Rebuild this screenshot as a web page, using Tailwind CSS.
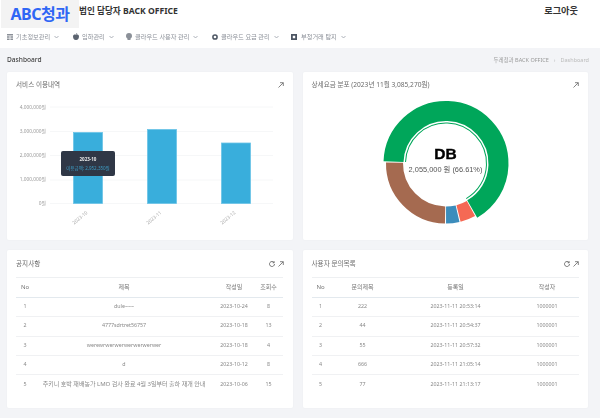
<!DOCTYPE html>
<html lang="ko">
<head>
<meta charset="UTF-8" />
<title>Dashboard</title>
<script src="https://cdn.jsdelivr.net/npm/@tailwindcss/browser@4"></script>
</head>
<body class="w-[600px] h-[418px] overflow-hidden bg-[#f3f4f7] font-['Noto_Sans','Noto_Sans_CJK_KR',sans-serif] text-[#777]">
	<header class="bg-white h-[48px]">
		<div class="flex items-start h-[28px]">
			<div class="w-[78px] h-[28px] ml-px bg-[#f3f3f3] flex items-center justify-center text-[16px] leading-none font-bold tracking-[-0.5px] text-[#2f66f5]">ABC청과</div>
			<div class="h-[22px] flex items-center text-[8.6px] font-bold text-[#333] whitespace-nowrap">법인 담당자 BACK OFFICE</div>
			<div class="ml-auto mr-[22px] h-[22px] flex items-center text-[9.2px] font-bold text-[#333]">로그아웃</div>
		</div>
		<nav class="will-change-transform flex items-center h-[16px] mt-px pl-[7px] text-[6.2px] text-[#8b9098] whitespace-nowrap">
			<div class="flex items-center w-[66px]">
				<svg class="w-[6px] h-[6px] mr-[3px]" viewBox="0 0 6 6" fill="#8b9098"><path d="M0 0h6v1.400H0zM0 2.300h2.600v1.400H0zM3.400 2.300H6v1.400H3.400zM0 4.600h2.600V6H0zM3.400 4.600H6V6H3.400z"/></svg>
				<span>기초정보관리</span>
				<svg class="w-[5px] h-[4px] ml-[4px]" viewBox="0 0 5 4" fill="none" stroke="#9aa0a8" stroke-width=".8"><path d="M.5 1l2 2 2-2"/></svg>
			</div>
			<div class="flex items-center w-[53px]">
				<svg class="w-[6px] h-[7px] mr-[3px]" viewBox="0 0 6 7" fill="#5c6470"><path d="M3 1.800C4 1.300 6 1.400 6 3.600 6 5.400 4.800 7 4 7 3.500 7 3.400 6.700 3 6.700S2.500 7 2 7C1.200 7 0 5.400 0 3.600 0 1.400 2 1.300 3 1.800zM3 1.500C3 .8 3.500.2 4.200 0 4.200.8 3.700 1.400 3 1.500z"/></svg>
				<span>입하관리</span>
				<svg class="w-[5px] h-[4px] ml-[4px]" viewBox="0 0 5 4" fill="none" stroke="#9aa0a8" stroke-width=".8"><path d="M.5 1l2 2 2-2"/></svg>
			</div>
			<div class="flex items-center w-[86px]">
				<svg class="w-[6px] h-[7px] mr-[3px]" viewBox="0 0 6 7" fill="#8b9098"><path d="M3 0a3 3 0 0 1 3 3c0 1.400-.9 2.300-1.500 2.700V7h-3V5.700C.9 5.300 0 4.400 0 3a3 3 0 0 1 3-3z"/></svg>
				<span>클라우드 사용자 관리</span>
				<svg class="w-[5px] h-[4px] ml-[4px]" viewBox="0 0 5 4" fill="none" stroke="#9aa0a8" stroke-width=".8"><path d="M.5 1l2 2 2-2"/></svg>
			</div>
			<div class="flex items-center w-[79px]">
				<svg class="w-[6px] h-[6px] mr-[3px]" viewBox="0 0 6 6" fill="none" stroke="#4d5663" stroke-width="1.500"><circle cx="3" cy="3" r="2.100"/></svg>
				<span>클라우드 요금 관리</span>
				<svg class="w-[5px] h-[4px] ml-[4px]" viewBox="0 0 5 4" fill="none" stroke="#9aa0a8" stroke-width=".8"><path d="M.5 1l2 2 2-2"/></svg>
			</div>
			<div class="flex items-center">
				<svg class="w-[6px] h-[6px] mr-[4px]" viewBox="0 0 6 6" fill="#4d5663"><path d="M0 0h6v6H0zM1.800 1.800v2.400h2.400V1.800z"/></svg>
				<span>부청거래 탐지</span>
				<svg class="w-[5px] h-[4px] ml-[4px]" viewBox="0 0 5 4" fill="none" stroke="#9aa0a8" stroke-width=".8"><path d="M.5 1l2 2 2-2"/></svg>
			</div>
		</nav>
	</header>

	<main class="will-change-transform pl-[7px] pr-[12px]">
		<div class="flex items-center justify-between h-[24px] mr-[-1px]">
			<h1 class="text-[6.6px] font-medium text-[#444]">Dashboard</h1>
			<div class="flex items-center text-[5.5px] text-[#999]">
				<span>두레청과 BACK OFFICE</span>
				<span class="mx-[5px] text-[#bbb]">›</span>
				<span class="text-[#bbb]">Dashboard</span>
			</div>
		</div>

		<div class="grid grid-cols-2 gap-[10px] grid-rows-[168px_158px]">
			<section class="relative bg-white rounded-[2px] shadow-[0_0_2px_rgba(0,0,0,0.04)]">
				<div class="flex items-center justify-between h-[26px] px-[9px] text-[6.6px] text-[#6b6b6b]">
					<span>서비스 이용내역</span>
					<svg class="w-[6px] h-[6px]" viewBox="0 0 6 6" fill="none" stroke="#666" stroke-width=".8"><path d="M.5 5.500L5.200.8M2 .7h3.300V4"/></svg>
				</div>
				<svg class="block" width="286" height="142" viewBox="0 0 286 142" font-size="4.8" fill="#999" font-family="'Noto Sans','Noto Sans CJK KR',sans-serif">
					<g stroke="#f6f7f8" stroke-width="1">
						<path d="M43 9h223M43 33.500h223M43 57.500h223M43 82h223M43 105.500h223"/>
					</g>
					<g text-anchor="end">
						<text x="39" y="10.500">4,000,000원</text>
						<text x="39" y="34.500">3,000,000원</text>
						<text x="39" y="59">2,000,000원</text>
						<text x="39" y="83">1,000,000원</text>
						<text x="39" y="107">0원</text>
					</g>
					<g fill="#39aedc" stroke="#6cc4e6" stroke-width=".8">
						<rect x="66.500" y="34.500" width="29" height="71"/>
						<rect x="140.500" y="31.500" width="29" height="74"/>
						<rect x="214.500" y="45" width="29" height="60.500"/>
					</g>
					<g text-anchor="middle" fill="#aaa">
						<text transform="translate(74 121) rotate(-40)">2023-10</text>
						<text transform="translate(148 121) rotate(-40)">2023-11</text>
						<text transform="translate(222 121) rotate(-40)">2023-12</text>
					</g>
				</svg>
				<div class="absolute left-[54px] top-[79px] w-[54px] h-[25px] rounded-[2px] bg-[#2f3746] flex flex-col items-center justify-center text-[4.5px] leading-[9px]">
					<span class="font-bold text-[#e8e8e8]">2023-10</span>
					<span class="text-[#3d9cc4] whitespace-nowrap">이용금액: 2,952,350원</span>
				</div>
			</section>

			<section class="bg-white rounded-[2px] shadow-[0_0_2px_rgba(0,0,0,0.04)] flex flex-col">
				<div class="flex items-center justify-between h-[26px] px-[9px] text-[6.6px] text-[#6b6b6b]">
					<span>상세요금 분포 (2023년 11월 3,085,270원)</span>
					<svg class="w-[6px] h-[6px]" viewBox="0 0 6 6" fill="none" stroke="#666" stroke-width=".8"><path d="M.5 5.500L5.200.8M2 .7h3.300V4"/></svg>
				</div>
				<div class="relative ml-[73px] w-[140px] h-[135px] mt-[-1px]">
					<svg class="block" width="140" height="135" viewBox="0 0 140 135" fill="none">
						<circle cx="70" cy="66.500" r="52.500" stroke="#00a65a" stroke-width="20" pathLength="360" stroke-dasharray="238 122" transform="rotate(182 70 66.500)"/>
						<circle cx="70" cy="66.500" r="40.500" stroke="#00a65a" stroke-width="1" pathLength="360" stroke-dasharray="238 122" transform="rotate(182 70 66.500)"/>
						<circle cx="70" cy="66.500" r="51.500" stroke="#f56954" stroke-width="17" pathLength="360" stroke-dasharray="15 345" transform="rotate(61 70 66.500)"/>
						<circle cx="70" cy="66.500" r="51.500" stroke="#3c8dbc" stroke-width="17" pathLength="360" stroke-dasharray="13 347" transform="rotate(77 70 66.500)"/>
						<circle cx="70" cy="66.500" r="51.500" stroke="#a56a50" stroke-width="17" pathLength="360" stroke-dasharray="90 270" transform="rotate(91 70 66.500)"/>
					</svg>
					<div class="absolute left-0 right-0 top-[47px] flex flex-col items-center font-['Liberation_Sans','Noto_Sans_CJK_KR',sans-serif]">
						<span class="text-[15.5px] leading-[20px] font-bold text-black [-webkit-text-stroke:0.4px_black]">DB</span>
						<span class="text-[7.4px] leading-[11px] text-[#555] whitespace-nowrap">2,055,000 원 (66.61%)</span>
					</div>
				</div>
			</section>

			<section class="bg-white rounded-[2px] shadow-[0_0_2px_rgba(0,0,0,0.04)] px-[9px]">
				<div class="flex items-center justify-between h-[27px] text-[6.6px] text-[#6b6b6b]">
					<span>공지사항</span>
					<div class="flex items-center gap-[3px]">
						<svg class="w-[6px] h-[6px]" viewBox="0 0 6 6" fill="none" stroke="#555" stroke-width=".8"><path d="M5 1.500A2.500 2.500 0 1 0 5.500 3M5.200.3v1.500H3.700"/></svg>
						<svg class="w-[6px] h-[6px]" viewBox="0 0 6 6" fill="none" stroke="#666" stroke-width=".8"><path d="M.5 5.500L5.200.8M2 .7h3.300V4"/></svg>
					</div>
				</div>
				<table class="w-[267px] table-fixed text-[5.3px] text-center text-[#888]">
					<colgroup><col class="w-[18px]" /><col class="w-[180px]" /><col class="w-[40px]" /><col class="w-[29px]" /></colgroup>
					<thead>
						<tr class="h-[20px] border-t border-b-[1.500px] border-t-[#eef0f2] border-b-[#e3e9ee] text-[6px] text-[#777]"><th class="font-normal">No</th><th class="font-normal">제목</th><th class="font-normal">작성일</th><th class="font-normal">조회수</th></tr>
					</thead>
					<tbody>
						<tr class="h-[19.300px] border-b border-[#f0f1f3]"><td>1</td><td>dule~~~</td><td>2023-10-24</td><td>8</td></tr>
						<tr class="h-[19.300px] border-b border-[#f0f1f3]"><td>2</td><td>4777sdrtret56757</td><td>2023-10-18</td><td>13</td></tr>
						<tr class="h-[19.300px] border-b border-[#f0f1f3]"><td>3</td><td>werewrwerwerwerwerwerwer</td><td>2023-10-18</td><td>4</td></tr>
						<tr class="h-[19.300px] border-b border-[#f0f1f3]"><td>4</td><td>d</td><td>2023-10-12</td><td>8</td></tr>
						<tr class="h-[19.300px]"><td>5</td><td class="whitespace-nowrap text-[6px]">주키니 호박 재배농가 LMO 검사 완료 4월 3일부터 출하 재개 안내</td><td>2023-10-06</td><td>15</td></tr>
					</tbody>
				</table>
			</section>

			<section class="bg-white rounded-[2px] shadow-[0_0_2px_rgba(0,0,0,0.04)] px-[9px]">
				<div class="flex items-center justify-between h-[27px] text-[6.6px] text-[#6b6b6b]">
					<span>사용자 문의목록</span>
					<div class="flex items-center gap-[3px]">
						<svg class="w-[6px] h-[6px]" viewBox="0 0 6 6" fill="none" stroke="#555" stroke-width=".8"><path d="M5 1.500A2.500 2.500 0 1 0 5.500 3M5.200.3v1.500H3.700"/></svg>
						<svg class="w-[6px] h-[6px]" viewBox="0 0 6 6" fill="none" stroke="#666" stroke-width=".8"><path d="M.5 5.500L5.200.8M2 .7h3.300V4"/></svg>
					</div>
				</div>
				<table class="w-[267px] table-fixed text-[5.3px] text-center text-[#888]">
					<colgroup><col class="w-[18px]" /><col class="w-[66px]" /><col class="w-[120px]" /><col class="w-[63px]" /></colgroup>
					<thead>
						<tr class="h-[20px] border-t border-b-[1.500px] border-t-[#eef0f2] border-b-[#e3e9ee] text-[6px] text-[#777]"><th class="font-normal">No</th><th class="font-normal">문의제목</th><th class="font-normal">등록일</th><th class="font-normal">작성자</th></tr>
					</thead>
					<tbody>
						<tr class="h-[19.300px] border-b border-[#f0f1f3]"><td>1</td><td>222</td><td>2023-11-11 20:53:14</td><td>1000001</td></tr>
						<tr class="h-[19.300px] border-b border-[#f0f1f3]"><td>2</td><td>44</td><td>2023-11-11 20:54:37</td><td>1000001</td></tr>
						<tr class="h-[19.300px] border-b border-[#f0f1f3]"><td>3</td><td>55</td><td>2023-11-11 20:57:32</td><td>1000001</td></tr>
						<tr class="h-[19.300px] border-b border-[#f0f1f3]"><td>4</td><td>666</td><td>2023-11-11 21:05:14</td><td>1000001</td></tr>
						<tr class="h-[19.300px]"><td>5</td><td>77</td><td>2023-11-11 21:13:17</td><td>1000001</td></tr>
					</tbody>
				</table>
			</section>
		</div>
	</main>
</body>
</html>
